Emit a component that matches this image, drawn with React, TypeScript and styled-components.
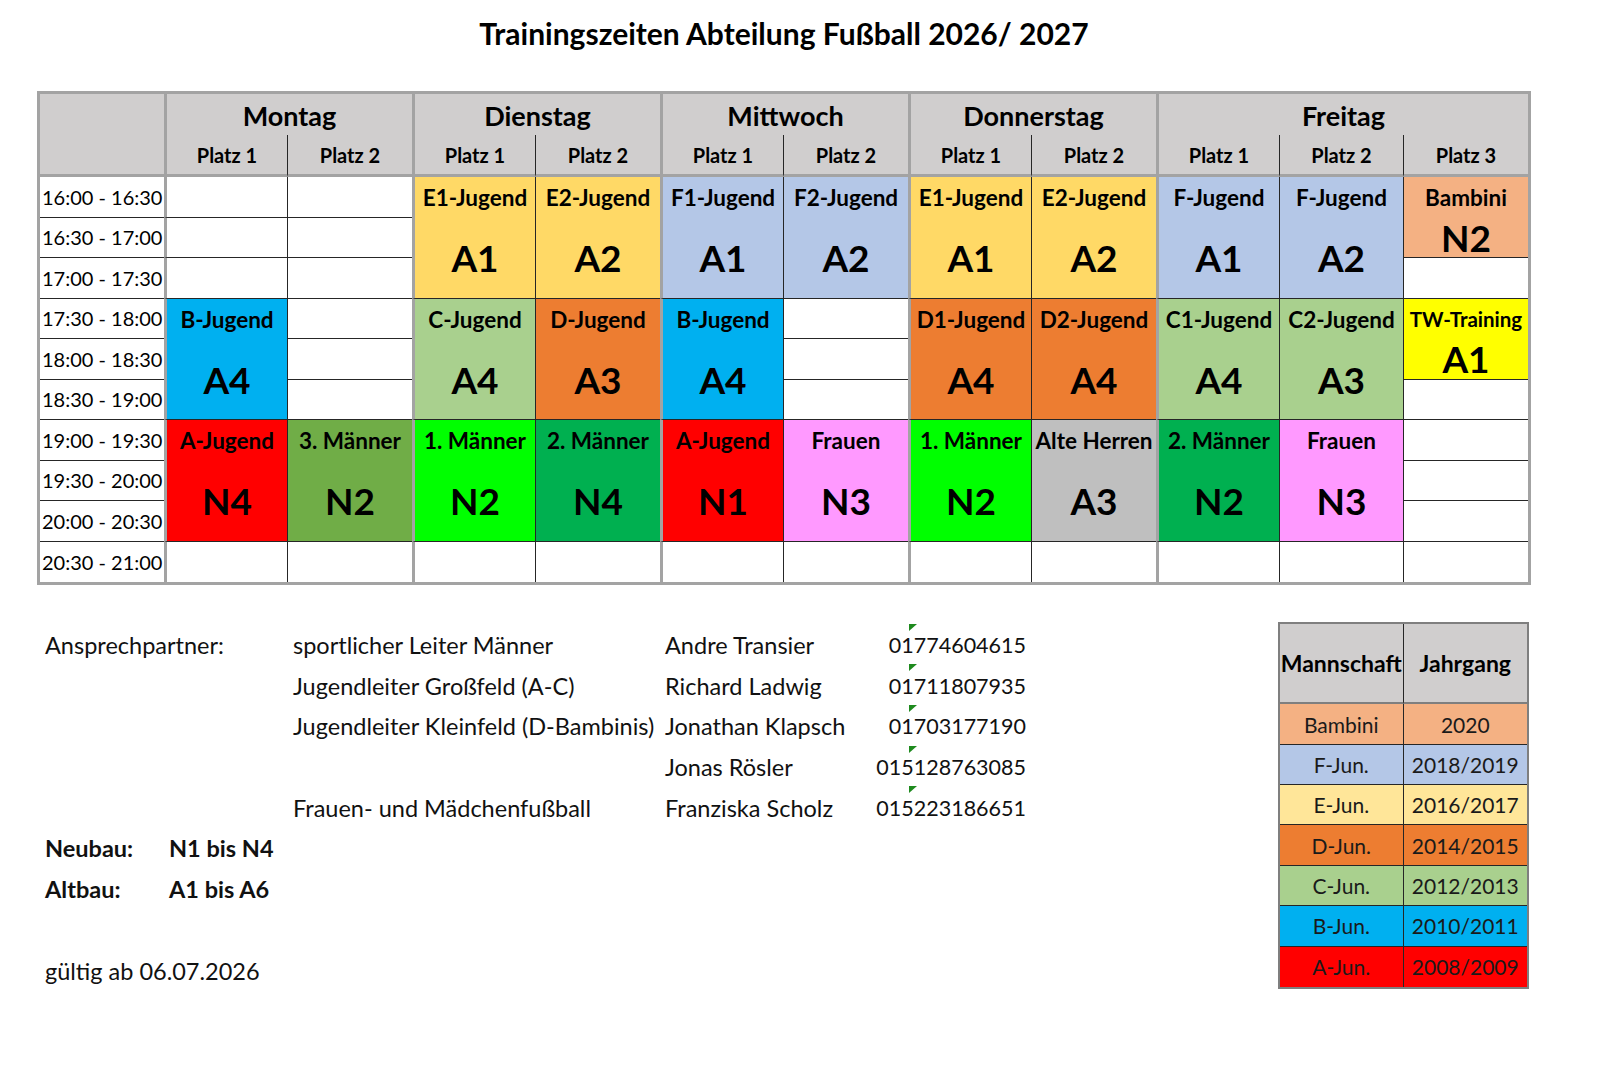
import React from 'react';
import styled, { createGlobalStyle } from 'styled-components';

const GlobalStyle = createGlobalStyle`
  * { box-sizing: border-box; }
  body {
    margin: 0;
    background: #ffffff;
    font-family: Lato, "Open Sans", sans-serif;
    color: #000000;
  }
`;

const COL = 124;
const ROW = 40.5;
const LINE = '#262626';
const SEP = '3px solid #a3a3a3';
const HEAD = '#d0cece';

const Page = styled.div`
  width: 1600px;
  padding-left: 40px;
`;

const Title = styled.h1`
  width: ${COL * 12}px;
  height: 94px;
  margin: 0;
  padding-top: 13px;
  text-align: center;
  font-size: 30px;
  line-height: 40px;
  font-weight: 700;
`;

const Table = styled.div`
  display: grid;
  grid-template-columns: repeat(12, ${COL}px);
  grid-template-rows: 41px 42px repeat(10, ${ROW}px);
  width: ${COL * 12}px;
  outline: 3px solid #a3a3a3;
`;

interface CellProps {
  $col: number;
  $row: number;
  $cols?: number;
  $rows?: number;
  $bg?: string;
  $sep?: boolean;
  $noRight?: boolean;
  $bottom?: string;
}

const Cell = styled.div<CellProps>`
  grid-column: ${(p) => p.$col} / span ${(p) => p.$cols || 1};
  grid-row: ${(p) => p.$row} / span ${(p) => p.$rows || 1};
  background: ${(p) => p.$bg || '#ffffff'};
  border-left: ${(p) => (p.$sep ? SEP : 'none')};
  border-right: ${(p) => (p.$noRight ? 'none' : `1px solid ${LINE}`)};
  border-bottom: ${(p) => p.$bottom || `1px solid ${LINE}`};
  min-width: 0;
`;

const DayHead = styled(Cell)`
  display: flex;
  align-items: center;
  justify-content: center;
  font-size: 27px;
  font-weight: 700;
  padding-top: 2px;
`;

const PlatzHead = styled(Cell)`
  display: flex;
  align-items: center;
  justify-content: center;
  font-size: 20px;
  font-weight: 700;
`;

const Time = styled(Cell)`
  display: flex;
  align-items: center;
  padding-left: 2px;
  font-size: 20px;
  white-space: nowrap;
`;

const Slot = styled(Cell)`
  display: flex;
  flex-direction: column;
  align-items: center;
`;

const Team = styled.div<{ $tight?: boolean }>`
  height: ${ROW}px;
  display: flex;
  align-items: center;
  justify-content: center;
  font-size: ${(p) => (p.$tight ? 20.5 : 22.5)}px;
  font-weight: 700;
  white-space: nowrap;
  padding-top: 1px;
`;

const Field = styled.div`
  flex: 1;
  display: flex;
  align-items: center;
  justify-content: center;
  font-size: 37px;
  font-weight: 700;
  line-height: 1;
`;

const C = {
  e: '#ffd966',
  f: '#b4c7e7',
  c: '#a9d08e',
  d: '#ed7d31',
  b: '#00b0f0',
  a: '#ff0000',
  m3: '#70ad47',
  m1: '#00ff00',
  m2: '#00b050',
  fr: '#ff99ff',
  ah: '#bfbfbf',
  bam: '#f4b183',
  tw: '#ffff00',
};

type Entry = { team: string; field: string; bg: string; rows: number; tight?: boolean } | null;

// each column: list of entries from 16:00 on; null = empty half hour
const columns: Entry[][] = [
  [null, null, null, { team: 'B-Jugend', field: 'A4', bg: C.b, rows: 3 }, { team: 'A-Jugend', field: 'N4', bg: C.a, rows: 3 }, null],
  [null, null, null, null, null, null, { team: '3. Männer', field: 'N2', bg: C.m3, rows: 3 }, null],
  [{ team: 'E1-Jugend', field: 'A1', bg: C.e, rows: 3 }, { team: 'C-Jugend', field: 'A4', bg: C.c, rows: 3 }, { team: '1. Männer', field: 'N2', bg: C.m1, rows: 3 }, null],
  [{ team: 'E2-Jugend', field: 'A2', bg: C.e, rows: 3 }, { team: 'D-Jugend', field: 'A3', bg: C.d, rows: 3 }, { team: '2. Männer', field: 'N4', bg: C.m2, rows: 3 }, null],
  [{ team: 'F1-Jugend', field: 'A1', bg: C.f, rows: 3 }, { team: 'B-Jugend', field: 'A4', bg: C.b, rows: 3 }, { team: 'A-Jugend', field: 'N1', bg: C.a, rows: 3 }, null],
  [{ team: 'F2-Jugend', field: 'A2', bg: C.f, rows: 3 }, null, null, null, { team: 'Frauen', field: 'N3', bg: C.fr, rows: 3 }, null],
  [{ team: 'E1-Jugend', field: 'A1', bg: C.e, rows: 3 }, { team: 'D1-Jugend', field: 'A4', bg: C.d, rows: 3 }, { team: '1. Männer', field: 'N2', bg: C.m1, rows: 3 }, null],
  [{ team: 'E2-Jugend', field: 'A2', bg: C.e, rows: 3 }, { team: 'D2-Jugend', field: 'A4', bg: C.d, rows: 3 }, { team: 'Alte Herren', field: 'A3', bg: C.ah, rows: 3 }, null],
  [{ team: 'F-Jugend', field: 'A1', bg: C.f, rows: 3 }, { team: 'C1-Jugend', field: 'A4', bg: C.c, rows: 3 }, { team: '2. Männer', field: 'N2', bg: C.m2, rows: 3 }, null],
  [{ team: 'F-Jugend', field: 'A2', bg: C.f, rows: 3 }, { team: 'C2-Jugend', field: 'A3', bg: C.c, rows: 3 }, { team: 'Frauen', field: 'N3', bg: C.fr, rows: 3 }, null],
  [{ team: 'Bambini', field: 'N2', bg: C.bam, rows: 2 }, null, { team: 'TW-Training', field: 'A1', bg: C.tw, rows: 2, tight: true }, null, null, null, null, null],
];

const days = [
  { name: 'Montag', col: 2, span: 2 },
  { name: 'Dienstag', col: 4, span: 2 },
  { name: 'Mittwoch', col: 6, span: 2 },
  { name: 'Donnerstag', col: 8, span: 2 },
  { name: 'Freitag', col: 10, span: 3 },
];

const times = [
  '16:00 - 16:30', '16:30 - 17:00', '17:00 - 17:30', '17:30 - 18:00', '18:00 - 18:30',
  '18:30 - 19:00', '19:00 - 19:30', '19:30 - 20:00', '20:00 - 20:30', '20:30 - 21:00',
];

const groupStart = [2, 4, 6, 8, 10];
const groupEnd = [1, 3, 5, 7, 9, 12];

const Bottom = styled.div`
  display: grid;
  grid-template-columns: repeat(12, ${COL}px);
  grid-template-rows: repeat(10, 40.7px);
  width: ${COL * 12}px;
  font-size: 23.5px;
`;

const Text = styled.div<{ $col: number; $row: number; $bold?: boolean }>`
  grid-column: ${(p) => p.$col};
  grid-row: ${(p) => p.$row};
  display: flex;
  align-items: center;
  padding: 4px 0 0 5px;
  white-space: nowrap;
  font-weight: ${(p) => (p.$bold ? 700 : 400)};
  color: #111111;
`;

const Phone = styled.div<{ $row: number }>`
  grid-column: 8;
  grid-row: ${(p) => p.$row};
  position: relative;
  display: flex;
  align-items: center;
  justify-content: flex-end;
  padding: 4px 6px 0 0;
  font-size: 21.5px;
  white-space: nowrap;
  color: #111111;

  &::before {
    content: '';
    position: absolute;
    top: 1px;
    left: 1px;
    border-top: 7px solid #1e8a1e;
    border-right: 8px solid transparent;
  }
`;

const Legend = styled.div`
  grid-column: 11 / span 2;
  grid-row: 2 / span 9;
  display: grid;
  grid-template-columns: 1fr 1fr;
  grid-template-rows: 2fr repeat(7, 1fr);
  border: 2px solid #7f7f7f;
  margin: -1px -1px 0 -2px;
`;

const LegendHead = styled.div<{ $last?: boolean }>`
  background: ${HEAD};
  display: flex;
  align-items: center;
  justify-content: center;
  font-size: 23px;
  font-weight: 700;
  white-space: nowrap;
  border-bottom: 2px solid #7f7f7f;
  border-right: ${(p) => (p.$last ? 'none' : `1px solid ${LINE}`)};
`;

const LegendCell = styled.div<{ $bg: string; $last?: boolean; $end?: boolean }>`
  background: ${(p) => p.$bg};
  display: flex;
  align-items: center;
  justify-content: center;
  font-size: 21px;
  color: #1a1a1a;
  border-right: ${(p) => (p.$last ? 'none' : `1px solid ${LINE}`)};
  border-bottom: ${(p) => (p.$end ? 'none' : `1px solid ${LINE}`)};
`;

const legend = [
  ['Bambini', '2020', '#f4b183'],
  ['F-Jun.', '2018/2019', '#b4c7e7'],
  ['E-Jun.', '2016/2017', '#ffe699'],
  ['D-Jun.', '2014/2015', '#ed7d31'],
  ['C-Jun.', '2012/2013', '#a9d08e'],
  ['B-Jun.', '2010/2011', '#00b0f0'],
  ['A-Jun.', '2008/2009', '#ff0000'],
];

const contacts = [
  ['sportlicher Leiter Männer', 'Andre Transier', '01774604615'],
  ['Jugendleiter Großfeld (A-C)', 'Richard Ladwig', '01711807935'],
  ['Jugendleiter Kleinfeld (D-Bambinis)', 'Jonathan Klapsch', '01703177190'],
  ['', 'Jonas Rösler', '015128763085'],
  ['Frauen- und Mädchenfußball', 'Franziska Scholz', '015223186651'],
];

const renderColumn = (entries: Entry[], i: number) => {
  const col = i + 2;
  const sep = groupStart.includes(col);
  const noRight = groupEnd.includes(col);
  let row = 3;
  return entries.map((e, k) => {
    const start = row;
    const span = e ? e.rows : 1;
    row += span;
    const last = start + span - 1 === 12;
    const bottom = last ? 'none' : undefined;
    if (!e) {
      return <Cell key={k} $col={col} $row={start} $sep={sep} $noRight={noRight} $bottom={bottom} />;
    }
    return (
      <Slot key={k} $col={col} $row={start} $rows={span} $bg={e.bg} $sep={sep} $noRight={noRight} $bottom={bottom}>
        <Team $tight={e.tight}>{e.team}</Team>
        <Field>{e.field}</Field>
      </Slot>
    );
  });
};

const App: React.FC = () => (
  <Page>
    <GlobalStyle />
    <Title>Trainingszeiten Abteilung Fußball 2026/ 2027</Title>
    <Table>
      <Cell $col={1} $row={1} $rows={2} $bg={HEAD} $noRight $bottom={SEP} />
      {days.map((d) => (
        <DayHead key={d.name} $col={d.col} $row={1} $cols={d.span} $bg={HEAD} $sep $noRight $bottom="none">
          {d.name}
        </DayHead>
      ))}
      {Array.from({ length: 11 }, (_, i) => {
        const col = i + 2;
        const label = col >= 10 ? `Platz ${col - 9}` : `Platz ${col % 2 === 0 ? 1 : 2}`;
        return (
          <PlatzHead
            key={col}
            $col={col}
            $row={2}
            $bg={HEAD}
            $sep={groupStart.includes(col)}
            $noRight={groupEnd.includes(col)}
            $bottom={SEP}
          >
            {label}
          </PlatzHead>
        );
      })}
      {times.map((t, i) => (
        <Time key={t} $col={1} $row={i + 3} $noRight $bottom={i === 9 ? 'none' : undefined}>
          {t}
        </Time>
      ))}
      {columns.map(renderColumn)}
    </Table>
    <Bottom>
      <Text $col={1} $row={2}>Ansprechpartner:</Text>
      {contacts.map(([role, name, phone], i) => (
        <React.Fragment key={phone}>
          {role && <Text $col={3} $row={i + 2}>{role}</Text>}
          <Text $col={6} $row={i + 2}>{name}</Text>
          <Phone $row={i + 2}>{phone}</Phone>
        </React.Fragment>
      ))}
      <Text $col={1} $row={7} $bold>Neubau:</Text>
      <Text $col={2} $row={7} $bold>N1 bis N4</Text>
      <Text $col={1} $row={8} $bold>Altbau:</Text>
      <Text $col={2} $row={8} $bold>A1 bis A6</Text>
      <Text $col={1} $row={10}>gültig ab 06.07.2026</Text>
      <Legend>
        <LegendHead>Mannschaft</LegendHead>
        <LegendHead $last>Jahrgang</LegendHead>
        {legend.map(([team, year, bg], i) => (
          <React.Fragment key={team}>
            <LegendCell $bg={bg} $end={i === legend.length - 1}>{team}</LegendCell>
            <LegendCell $bg={bg} $last $end={i === legend.length - 1}>{year}</LegendCell>
          </React.Fragment>
        ))}
      </Legend>
    </Bottom>
  </Page>
);

export default App;
